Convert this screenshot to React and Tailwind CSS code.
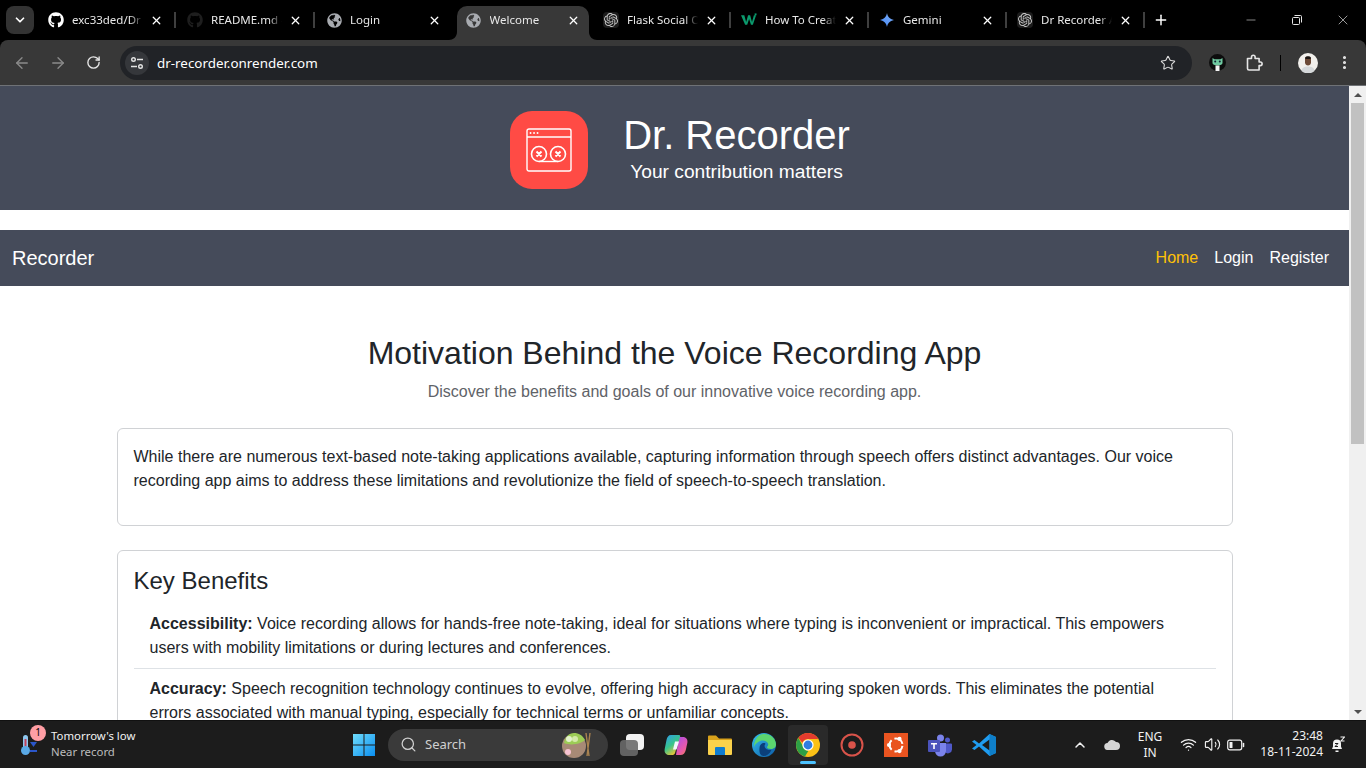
import { ArrowLeft, ArrowRight, RotateCw, Star, EllipsisVertical, ChevronDown, ChevronUp, X, Plus, Minus, Search, Wifi, Volume2 } from "lucide-react";
import { FaGithub, FaGlobeAmericas } from "react-icons/fa";
import { SiOpenai } from "react-icons/si";

const uiFont = "font-['Noto_Sans','Open_Sans',sans-serif]";

function OpenAiIcon() {
  return (
    <span className="flex h-4 w-4 items-center justify-center rounded bg-[#1c1c1c] text-[#c8c8c8]">
      <SiOpenai size={14} />
    </span>
  );
}

function WixIcon() {
  return (
    <svg width="17" height="16" viewBox="0 0 17 16">
      <path d="M0 3h3.500l2 7 2-7h2.200l2 7 2-7H16l-3.400 10h-2L8.600 7l-2 6H4.400z" fill="#0b9a6d" />
      <rect x="14.500" y="1" width="2" height="2" fill="#0b9a6d" />
    </svg>
  );
}

function GeminiIcon() {
  return (
    <svg width="16" height="16" viewBox="0 0 16 16">
      <defs>
        <linearGradient id="gem" x1="0" y1="1" x2="1" y2="0">
          <stop offset="0" stopColor="#4285f4" />
          <stop offset="1" stopColor="#7fb0f8" />
        </linearGradient>
      </defs>
      <path d="M8 1c.6 3.800 2.600 6 7 7-4.400 1-6.400 3.200-7 7-.6-3.800-2.600-6-7-7 4.400-1 6.400-3.200 7-7z" fill="url(#gem)" />
    </svg>
  );
}

const tabs = [
  { title: "exc33ded/Dr Recorder", icon: <FaGithub size={16} className="text-white" />, sep: true, left: true },
  { title: "README.md - Dr", icon: <FaGithub size={16} className="text-[#1e1e1e]" />, sep: true, left: true },
  { title: "Login", icon: <FaGlobeAmericas size={15} className="text-[#a8abb0]" />, left: true },
  { title: "Welcome", icon: <FaGlobeAmericas size={15} className="text-[#a8abb0]" />, active: true },
  { title: "Flask Social OAuth", icon: <OpenAiIcon />, sep: true },
  { title: "How To Create", icon: <WixIcon />, sep: true },
  { title: "Gemini", icon: <GeminiIcon />, sep: true },
  { title: "Dr Recorder App", icon: <OpenAiIcon />, sep: true },
];

function Tab({ tab }) {
  if (tab.active) {
    return (
      <div className="relative mr-[5px] mt-[6px] flex h-[34px] w-[132px] shrink-0 items-center rounded-t-[10px] bg-[#383838] pb-[6px] pl-[8.5px]">
        <TabBody tab={tab} />
        <svg className="absolute bottom-0 -left-2" width="8" height="8" viewBox="0 0 8 8">
          <path d="M8 0v8H0c4 0 8-3 8-8z" fill="#383838" />
        </svg>
        <svg className="absolute bottom-0 -right-2" width="8" height="8" viewBox="0 0 8 8">
          <path d="M0 0v8h8C4 8 0 5 0 0z" fill="#383838" />
        </svg>
      </div>
    );
  }
  return (
    <div className={tab.left ? "flex h-10 w-[139px] shrink-0 items-center pl-[8px]" : "flex h-10 w-[138px] shrink-0 items-center pl-[9px]"}>
      <TabBody tab={tab} />
      {tab.sep && <span className="ml-[8px] h-[16px] w-[2px] bg-[#3f3f3f]" />}
    </div>
  );
}

function TabBody({ tab }) {
  return (
    <>
      <span className="flex h-4 w-4 shrink-0 items-center justify-center">{tab.icon}</span>
      <span className="ml-[8px] w-[74px] overflow-hidden whitespace-nowrap text-[11.5px] text-[#e8e8e8] [mask-image:linear-gradient(to_right,black_78%,transparent_96%)]">
        {tab.title}
      </span>
      <span className="flex w-5 shrink-0 justify-center text-white">
        <X size={13} strokeWidth={2.4} />
      </span>
    </>
  );
}

function TuneIcon() {
  return (
    <svg width="14" height="14" viewBox="0 0 14 14" fill="none" stroke="#e3e3e3" strokeWidth="1.400">
      <circle cx="3.500" cy="3.500" r="1.800" />
      <path d="M7 3.500h6M1 10.500h6" />
      <circle cx="10.500" cy="10.500" r="1.800" />
    </svg>
  );
}

function CatIcon() {
  return (
    <svg width="17" height="17" viewBox="0 0 17 17">
      <circle cx="8.500" cy="8.500" r="8.500" fill="#0d0d0d" />
      <path d="M3.500 4l2 1.200h6l2-1.200v5c0 1.500-2 2.500-5 2.500s-5-1-5-2.500z" fill="#6fc9a0" />
      <circle cx="6.200" cy="7.500" r="1" fill="#123" />
      <circle cx="10.800" cy="7.500" r="1" fill="#123" />
      <path d="M6.500 11.500h4V17h-4z" fill="#f4f4f4" />
    </svg>
  );
}

function PuzzleIcon() {
  return (
    <svg className="ml-[20px]" width="17" height="17" viewBox="0 0 17 17" fill="none" stroke="#e6e6e6" strokeWidth="1.600" strokeLinejoin="round">
      <path d="M1.500 4.500h4V3a1.800 1.800 0 0 1 3.600 0v1.500h4v3.500h1.200a1.800 1.800 0 0 1 0 3.600h-1.200v4.400h-10.100c-.9 0-1.500-.6-1.500-1.500z" />
    </svg>
  );
}

function AvatarIcon() {
  return (
    <svg width="20" height="20" viewBox="0 0 20 20">
      <circle cx="10" cy="10" r="10" fill="#f2f0ec" />
      <path d="M7 6c0-2.500 6-2.500 6 0v3.500c0 2-1.500 3-3 3s-3-1-3-3z" fill="#6d4a37" />
      <path d="M7 5c0-2.500 6-2.500 6 0l-.5 1h-5z" fill="#1c1512" />
      <path d="M3.500 18c.5-3.500 3-4.500 6.500-4.500s6 1 6.500 4.500a10 10 0 0 1-13 0z" fill="#d5d8da" />
    </svg>
  );
}

function RestoreIcon() {
  return (
    <svg width="10" height="10" viewBox="0 0 10 10" fill="none" stroke="#e6e6e6" strokeWidth="1">
      <rect x="0.500" y="2.500" width="7" height="7" rx="1" />
      <path d="M2.500 .5h6a1 1 0 0 1 1 1v6" />
    </svg>
  );
}

function BrowserChrome() {
  return (
    <div className={`shrink-0 bg-black ${uiFont}`}>
      <div className="flex h-10 items-center">
        <div className="mx-[6px] flex h-7 w-7 shrink-0 items-center justify-center rounded-lg bg-[#333333] text-white">
          <ChevronDown size={14} strokeWidth={3} />
        </div>
        {tabs.map((tab) => (
          <Tab key={tab.title} tab={tab} />
        ))}
        <Plus size={16} strokeWidth={2.2} className="ml-[7px] text-white" />
        <div className="ml-auto flex items-center text-[#e6e6e6]">
          <span className="flex w-[46px] justify-center"><Minus size={14} strokeWidth={1} /></span>
          <span className="flex w-[46px] justify-center"><RestoreIcon /></span>
          <span className="flex w-[46px] justify-center"><X size={16} strokeWidth={1} /></span>
        </div>
      </div>
      <div className="flex h-[46px] items-center rounded-t-lg border-b border-[#6f7276] bg-[#383838]">
        <div className="flex w-[120px] shrink-0 items-center pl-[13px] text-[#8a8a8a]">
          <ArrowLeft size={18} strokeWidth={1.8} />
          <ArrowRight size={18} strokeWidth={1.8} className="ml-[18px]" />
          <RotateCw size={15} strokeWidth={2.2} className="ml-[19px] text-[#e6e6e6]" />
        </div>
        <div className="flex h-[34px] w-[1072px] shrink-0 items-center rounded-full bg-[#212327] pl-[5px] pr-[16px]">
          <span className="flex h-6 w-6 items-center justify-center rounded-full bg-[#35373b]">
            <TuneIcon />
          </span>
          <span className="ml-[8px] pt-[2px] text-[13.4px] text-white">dr-recorder.onrender.com</span>
          <Star size={16} strokeWidth={1.6} className="ml-auto text-[#dcdcdc]" />
        </div>
        <div className="ml-[17px] flex items-center text-[#e6e6e6]">
          <CatIcon />
          <PuzzleIcon />
          <span className="ml-[17px] h-[16px] w-px bg-black" />
          <span className="ml-[17px]"><AvatarIcon /></span>
          <EllipsisVertical size={17} strokeWidth={2.4} className="ml-[18px]" />
        </div>
      </div>
    </div>
  );
}

function LogoIcon() {
  return (
    <div className="mt-[3px] flex h-[78px] w-[78px] items-center justify-center rounded-[22px] bg-[#ff4b45]">
      <svg width="46" height="44" viewBox="0 0 46 44" fill="none" stroke="white" strokeWidth="1.400">
        <rect x="1" y="1" width="44" height="42" rx="2" />
        <path d="M1 9h44" />
        <path d="M4.500 5h.1M8 5h.1M11.500 5h.1" strokeWidth="1.800" strokeLinecap="round" />
        <circle cx="13" cy="26" r="7.500" strokeWidth="1.600" />
        <circle cx="32" cy="26" r="7.500" strokeWidth="1.600" />
        <path d="M13 33.500h19" />
        <path d="M10.500 23.500l5 5M15.500 23.500l-5 5M29.500 23.500l5 5M34.500 23.500l-5 5" strokeWidth="2" />
      </svg>
    </div>
  );
}

function Page() {
  return (
    <div className="min-w-0 flex-1 overflow-hidden bg-white font-['Liberation_Sans',Arial,sans-serif] text-[16px] leading-6 text-[#212529]">
      <header className="flex h-[124px] items-center justify-center bg-[#454b5a] pl-[11px] text-white">
        <LogoIcon />
        <div className="ml-[35px] flex flex-col items-center pb-px">
          <h1 className="mb-[2px] text-[40px] leading-[46px]">Dr. Recorder</h1>
          <p className="text-[19.2px] leading-[24px]">Your contribution matters</p>
        </div>
      </header>
      <nav className="mt-5 flex h-14 items-center bg-[#454b5a] pl-3 pr-5 text-white">
        <span className="text-[20px]">Recorder</span>
        <div className="ml-auto flex gap-4">
          <span className="text-[#ffc107]">Home</span>
          <span>Login</span>
          <span>Register</span>
        </div>
      </nav>
      <main className="mx-auto w-[1116px] pt-12">
        <div className="mb-6 text-center">
          <h2 className="mb-2 text-[32px] leading-[38.4px]">Motivation Behind the Voice Recording App</h2>
          <p className="text-[#5f6368]">Discover the benefits and goals of our innovative voice recording app.</p>
        </div>
        <section className="mb-6 rounded-md border border-[#d0d2d5] p-4">
          <p className="mb-4">
            While there are numerous text-based note-taking applications available, capturing information through speech offers distinct advantages. Our voice recording app aims to address these limitations and revolutionize the field of speech-to-speech translation.
          </p>
        </section>
        <section className="rounded-md border border-[#d0d2d5] p-4">
          <h3 className="mb-2 text-[24px] leading-[28.8px]">Key Benefits</h3>
          <ul>
            <li className="border-b border-[#dee2e6] px-4 py-2">
              <strong>Accessibility:</strong> Voice recording allows for hands-free note-taking, ideal for situations where typing is inconvenient or impractical. This empowers users with mobility limitations or during lectures and conferences.
            </li>
            <li className="px-4 py-2">
              <strong>Accuracy:</strong> Speech recognition technology continues to evolve, offering high accuracy in capturing spoken words. This eliminates the potential errors associated with manual typing, especially for technical terms or unfamiliar concepts.
            </li>
          </ul>
        </section>
      </main>
    </div>
  );
}

function Scrollbar() {
  return (
    <div className="flex w-[17px] shrink-0 flex-col items-center bg-[#f0f0f0]">
      <div className="flex h-[17px] items-center justify-center">
        <span className="h-0 w-0 border-x-[4px] border-b-[4px] border-x-transparent border-b-[#505050]" />
      </div>
      <div className="h-[341px] w-[13px] bg-[#c1c1c1]" />
      <div className="mt-auto flex h-[17px] items-center justify-center">
        <span className="h-0 w-0 border-x-[4px] border-t-[4px] border-x-transparent border-t-[#505050]" />
      </div>
    </div>
  );
}

function WinLogo() {
  return (
    <svg width="24" height="24" viewBox="0 0 24 24">
      <defs>
        <linearGradient id="win" x1="0" y1="0" x2="1" y2="1">
          <stop offset="0" stopColor="#6fdcfb" />
          <stop offset="1" stopColor="#0a8ef0" />
        </linearGradient>
      </defs>
      <path d="M1 1h10.500v10.500H1zM12.500 1H23v10.500H12.500zM1 12.500h10.500V23H1zM12.500 12.500H23V23H12.500z" fill="url(#win)" />
    </svg>
  );
}

function Thermometer() {
  return (
    <svg width="20" height="24" viewBox="0 0 20 24">
      <rect x="3" y="2" width="5" height="14" rx="2.500" fill="#8fc8ef" />
      <rect x="4.500" y="6" width="2" height="11" fill="#c2405a" />
      <circle cx="5.500" cy="17.500" r="4.500" fill="#5aa9e6" />
      <path d="M10 9h7l-3.500 5z" fill="#2b56c9" />
      <rect x="10" y="17" width="7" height="2" fill="#2b56c9" />
    </svg>
  );
}

function FoodIcon() {
  return (
    <svg width="30" height="28" viewBox="0 0 30 28">
      <circle cx="12" cy="15" r="12" fill="#a78a76" />
      <path d="M2 12c1-6 5-10 10-10s8 2 11 7c-4 4-14 6-21 3z" fill="#9ccc55" />
      <circle cx="7" cy="8" r="3" fill="#e3f2cc" />
      <circle cx="13" cy="8" r="3" fill="#d4eaa8" />
      <circle cx="6" cy="21" r="3" fill="#f7c3d2" />
      <path d="M24 2l3 23M28 2l-3 23" stroke="#a9824f" strokeWidth="1.400" />
    </svg>
  );
}

function TaskView() {
  return (
    <div className="relative h-[22px] w-[24px]">
      <div className="ml-[6px] h-[16px] w-[18px] rounded-sm bg-[#f2f2f2]" />
      <div className="absolute bottom-0 left-0 h-[16px] w-[18px] rounded-sm bg-[#6a6a6a]/90" />
    </div>
  );
}

function CopilotIcon() {
  return (
    <svg width="24" height="24" viewBox="0 0 24 24">
      <defs>
        <linearGradient id="cpa" x1="0" y1="0" x2="0.600" y2="1">
          <stop offset="0" stopColor="#2f9cf0" />
          <stop offset="0.550" stopColor="#38c48c" />
          <stop offset="1" stopColor="#f7c531" />
        </linearGradient>
        <linearGradient id="cpb" x1="0.300" y1="0" x2="1" y2="1">
          <stop offset="0" stopColor="#b650e0" />
          <stop offset="0.600" stopColor="#e85aa8" />
          <stop offset="1" stopColor="#f08050" />
        </linearGradient>
      </defs>
      <path d="M15 4h4c3 0 5 2.500 4.300 6l-1.500 7c-.7 3-2.500 5-5.300 5H12z" fill="url(#cpb)" />
      <path d="M7 2h8c1.200 0 1.500 1 1 2l-5 16c-.5 1.500-1.500 2-3 2H5c-3 0-5-2.500-4.300-6L2.500 7C3 4 4.500 2 7 2z" fill="url(#cpa)" />
      <path d="M11 8.500h4l-2.500 8h-3.500z" fill="#f4f8ff" />
    </svg>
  );
}

function FolderIcon() {
  return (
    <svg width="24" height="24" viewBox="0 0 24 24">
      <path d="M0 3.500a1 1 0 0 1 1-1h7l3 3h12a1 1 0 0 1 1 1V8H0z" fill="#d9a21b" />
      <path d="M0 7h24v14a1 1 0 0 1-1 1H1a1 1 0 0 1-1-1z" fill="#fbd24c" />
      <path d="M7 15a1 1 0 0 1 1-1h8a1 1 0 0 1 1 1v7H7z" fill="#0f7cd0" />
    </svg>
  );
}

function EdgeIcon() {
  return (
    <svg width="24" height="24" viewBox="0 0 24 24">
      <defs>
        <linearGradient id="edg" x1="0" y1="0" x2="1" y2="1">
          <stop offset="0" stopColor="#35c1f1" />
          <stop offset="1" stopColor="#0c59a4" />
        </linearGradient>
      </defs>
      <circle cx="12" cy="12" r="12" fill="url(#edg)" />
      <path d="M12 1c7 0 12 5 12 10.500 0 3-2.500 4.500-5 4.500-3 0-4-1-4-2 1-1 1.500-2 1-3.500C15 8 12 7 9.500 7.500 6 8.200 3 11 2 14 2 7 6 1 12 1z" fill="#5cd66f" />
      <path d="M7.500 15c0-3 2-5 4.500-5 1 0 1.500.5 1.500 1-2 1-1 7 6 6-2 4-5 6-8 6-3 0-4.500-3-4-8z" fill="#0b3f7a" />
    </svg>
  );
}

function ChromeIcon() {
  return (
    <svg width="24" height="24" viewBox="0 0 24 24">
      <circle cx="12" cy="12" r="12" fill="#fbc116" />
      <path d="M12 0a12 12 0 0 1 10.400 6H12a6 6 0 0 0-5.600 3.800L2.300 5A12 12 0 0 1 12 0z" fill="#e33b2e" />
      <path d="M2.300 5l5 8.700a6 6 0 0 0 5 4.300L9 23.600A12 12 0 0 1 2.300 5z" fill="#2c9f46" />
      <circle cx="12" cy="12" r="5.600" fill="#fff" />
      <circle cx="12" cy="12" r="4.400" fill="#2f7de1" />
    </svg>
  );
}

function RecordIcon() {
  return (
    <svg width="24" height="24" viewBox="0 0 24 24">
      <circle cx="12" cy="12" r="10.500" fill="none" stroke="#d9534a" strokeWidth="2" />
      <circle cx="12" cy="12" r="3.800" fill="#d9534a" />
    </svg>
  );
}

function UbuntuIcon() {
  return (
    <svg width="24" height="24" viewBox="0 0 24 24">
      <rect width="24" height="24" fill="#e95420" />
      <circle cx="12" cy="12" r="6.500" fill="none" stroke="#fff" strokeWidth="2" strokeDasharray="10.500 3.100" strokeDashoffset="-1" />
      <circle cx="5" cy="12" r="2.100" fill="#fff" />
      <circle cx="15.500" cy="5.900" r="2.100" fill="#fff" />
      <circle cx="15.500" cy="18.100" r="2.100" fill="#fff" />
    </svg>
  );
}

function TeamsIcon() {
  return (
    <svg width="24" height="24" viewBox="0 0 24 24">
      <circle cx="19.500" cy="7" r="2.500" fill="#5059c9" />
      <path d="M15 10.500h8a1 1 0 0 1 1 1v5a4 4 0 0 1-7 2.500z" fill="#5059c9" />
      <circle cx="12.500" cy="5" r="3.500" fill="#7b83eb" />
      <path d="M7 10h11v8a5.500 5.500 0 0 1-11 0z" fill="#7b83eb" />
      <rect x="0" y="7" width="12" height="12" rx="1" fill="#4b53bc" />
      <path d="M3 10h6v1.500H6.800V16H5.200v-4.500H3z" fill="#fff" />
    </svg>
  );
}

function VsCodeIcon() {
  return (
    <svg width="24" height="24" viewBox="0 0 24 24">
      <path d="M17.500 1L24 4v16l-6.500 3L7 13.500 2.500 17 0 15.500 4.500 12 0 8.500 2.500 7 7 10.500z" fill="#1f9cf0" />
      <path d="M17.500 6.500L10 12l7.500 5.500z" fill="#1c1c1c" />
      <path d="M17.500 1L24 4v16l-6.500 3z" fill="#0f7fc9" />
    </svg>
  );
}

function BatteryIcon() {
  return (
    <svg className="ml-[6.500px]" width="18" height="12" viewBox="0 0 18 12" fill="none">
      <rect x="0.700" y="1.200" width="14" height="9.600" rx="2" stroke="#f2f2f2" strokeWidth="1.200" />
      <rect x="2.500" y="3" width="3" height="6" rx="0.500" fill="#f2f2f2" />
      <path d="M16.500 4.500v3" stroke="#f2f2f2" strokeWidth="1.500" strokeLinecap="round" />
    </svg>
  );
}

function BellIcon() {
  return (
    <svg className="ml-[8px] mr-[21px]" width="14" height="17" viewBox="0 0 14 17">
      <path d="M6 3.500a4 4 0 0 0-4 4v3L1 13h10l-1-2.500v-3a4 4 0 0 0-4-4zM4.500 14.500h3V16h-3z" fill="#f2f2f2" />
      <path d="M4 7.500h3L4 10.500h3" fill="none" stroke="#1c1c1c" strokeWidth="1" />
      <path d="M9.500 1h4L10 5h3.500" fill="none" stroke="#f2f2f2" strokeWidth="1.100" />
    </svg>
  );
}

function Taskbar() {
  return (
    <div className={`flex h-12 shrink-0 items-center border-t border-[#111111] bg-[#1c1c1c] ${uiFont}`}>
      <div className="relative flex w-[340px] shrink-0 items-center pl-[20px]">
        <Thermometer />
        <span className="absolute left-[30px] top-[-5px] flex h-4 w-4 items-center justify-center rounded-full bg-[#ff9ea5] text-[10px] text-black">1</span>
        <div className="ml-[11px] -mt-[2px] flex flex-col text-[11.4px] leading-[16px]">
          <span className="text-[#f2f2f2]">Tomorrow's low</span>
          <span className="text-[#bdbdbd]">Near record</span>
        </div>
      </div>
      <div className="flex w-[48px] shrink-0 justify-center"><WinLogo /></div>
      <div className="flex h-8 w-[220px] shrink-0 items-center rounded-full bg-[#3a3a3a] pl-[12px] pr-[16px]">
        <Search size={17} strokeWidth={1.8} className="text-[#d0d0d0]" />
        <span className="ml-[8px] text-[13px] text-[#d0d0d0]">Search</span>
        <span className="ml-auto"><FoodIcon /></span>
      </div>
      <div className="ml-[2px] flex">
        <div className="flex h-10 w-11 items-center justify-center"><TaskView /></div>
        <div className="flex h-10 w-11 items-center justify-center"><CopilotIcon /></div>
        <div className="flex h-10 w-11 items-center justify-center"><FolderIcon /></div>
        <div className="flex h-10 w-11 items-center justify-center"><EdgeIcon /></div>
        <div className="relative flex h-10 w-11 items-center justify-center">
          <div className="flex h-10 w-10 items-center justify-center rounded bg-[#2a2a2a]"><ChromeIcon /></div>
          <span className="absolute bottom-[1px] h-[3px] w-4 rounded-full bg-[#4cc2ff]" />
        </div>
        <div className="flex h-10 w-11 items-center justify-center"><RecordIcon /></div>
        <div className="flex h-10 w-11 items-center justify-center"><UbuntuIcon /></div>
        <div className="flex h-10 w-11 items-center justify-center"><TeamsIcon /></div>
        <div className="flex h-10 w-11 items-center justify-center"><VsCodeIcon /></div>
      </div>
      <div className="ml-auto flex items-center text-[#f2f2f2]">
        <ChevronUp size={16} strokeWidth={2.2} />
        <svg className="ml-[16px]" width="16" height="11" viewBox="0 0 16 11">
          <path d="M4 11a3.500 3.500 0 0 1-.5-7A5 5 0 0 1 12 3a4 4 0 0 1 0 8z" fill="#d6d6d6" />
        </svg>
        <div className="ml-[6px] flex w-[48px] flex-col items-center text-[12px] leading-[16px]">
          <span>ENG</span>
          <span>IN</span>
        </div>
        <Wifi size={17} strokeWidth={1.8} className="ml-[5.500px]" />
        <Volume2 size={17} strokeWidth={1.6} className="ml-[7px]" />
        <BatteryIcon />
        <div className="ml-[14px] -mt-[2px] flex w-[64px] flex-col items-end text-[12px] leading-[16px]">
          <span>23:48</span>
          <span>18-11-2024</span>
        </div>
        <BellIcon />
      </div>
    </div>
  );
}

export default function App() {
  return (
    <div className="flex h-screen flex-col overflow-hidden bg-white">
      <BrowserChrome />
      <div className="flex min-h-0 flex-1">
        <Page />
        <Scrollbar />
      </div>
      <Taskbar />
    </div>
  );
}
